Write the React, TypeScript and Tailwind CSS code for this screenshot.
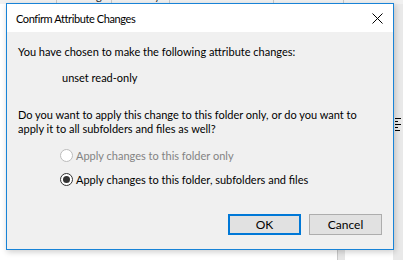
const tabs = ['General', 'Sharing', 'Security', 'Previous Versions', 'Customize'];

function RadioRow({ label, checked, disabled }: { label: string; checked?: boolean; disabled?: boolean }) {
  return (
    <div className="flex items-center h-[16px] pl-[53px]">
      <span
        className={`flex items-center justify-center w-[13px] h-[13px] rounded-full border bg-white ${
          disabled ? 'border-[#bcbcbc]' : 'border-[#333333]'
        }`}
      >
        {checked && <span className="block w-[7px] h-[7px] rounded-full bg-[#333333]" />}
      </span>
      <span className={`ml-[3px] ${disabled ? 'text-[#838383]' : 'text-black'}`}>{label}</span>
    </div>
  );
}

export default function App() {
  return (
    <div
      className="relative w-[403px] h-[260px] overflow-hidden bg-white text-[11px] leading-[15px]"
      style={{ fontFamily: 'Lato, "Noto Sans", sans-serif' }}
    >
      {/* property sheet behind the dialog */}
      <div className="h-[4px] overflow-hidden bg-[#f0f0f0]">
        <div className="flex -mt-[12px] text-[#222]">
          {tabs.map((t) => (
            <div key={t} className="px-[9px] h-[16px] border-r border-[#c8c8c8] leading-[16px] whitespace-nowrap">
              {t}
            </div>
          ))}
        </div>
      </div>
      <div className="flex h-[256px]">
        <div className="flex-1 bg-white" />
        <div className="w-[8px] bg-[#e6e6e6] border-l border-[#c8c8c8] mr-[48px]" />
        <div className="w-[10px] bg-[#e9e9e9] flex flex-col gap-[2px] pt-[114px] pl-[2px]">
          <div className="w-[6px] h-px bg-black" />
          <div className="w-[3px] h-px bg-black" />
          <div className="w-[6px] h-px bg-black" />
          <div className="w-[3px] h-px bg-black" />
          <div className="w-[5px] h-px bg-black" />
        </div>
      </div>

      {/* dialog window */}
      <div className="absolute left-[6px] top-[3px] w-[388px] h-[247px] border border-[#1883d7] bg-[#f0f0f0] flex flex-col shadow-[1px_2px_6px_rgba(0,0,0,0.2)]">
        <div className="h-[28px] bg-white flex items-center justify-between pl-[9px] pr-[10px]">
          <span className="text-black text-[11px] tracking-[-0.4px]">Confirm Attribute Changes</span>
          <svg width="11" height="11" viewBox="0 0 11 11">
            <path d="M0.5 0.5 L10.5 10.5 M10.5 0.5 L0.5 10.5" stroke="#000" strokeWidth="1" />
          </svg>
        </div>
        <div className="flex flex-col text-black">
          <div className="mt-[12px] pl-[11px]">You have chosen to make the following attribute changes:</div>
          <div className="mt-[11px] pl-[55px]">unset read-only</div>
          <div className="mt-[23px] pl-[11px] pr-[20px] leading-[14px]">
            Do you want to apply this change to this folder only, or do you want to apply it to all subfolders and files as well?
          </div>
          <div className="mt-[11px]">
            <RadioRow label="Apply changes to this folder only" disabled />
          </div>
          <div className="mt-[8px]">
            <RadioRow label="Apply changes to this folder, subfolders and files" checked />
          </div>
          <div className="mt-[27px] flex justify-end gap-[8px] pr-[11px]">
            <button className="w-[73px] h-[21px] bg-[#e1e1e1] border-2 border-[#0078d7] text-black text-[12px] leading-none">OK</button>
            <button className="w-[73px] h-[21px] bg-[#e1e1e1] border border-[#adadad] text-black text-[12px] leading-none">Cancel</button>
          </div>
        </div>
      </div>
    </div>
  );
}
